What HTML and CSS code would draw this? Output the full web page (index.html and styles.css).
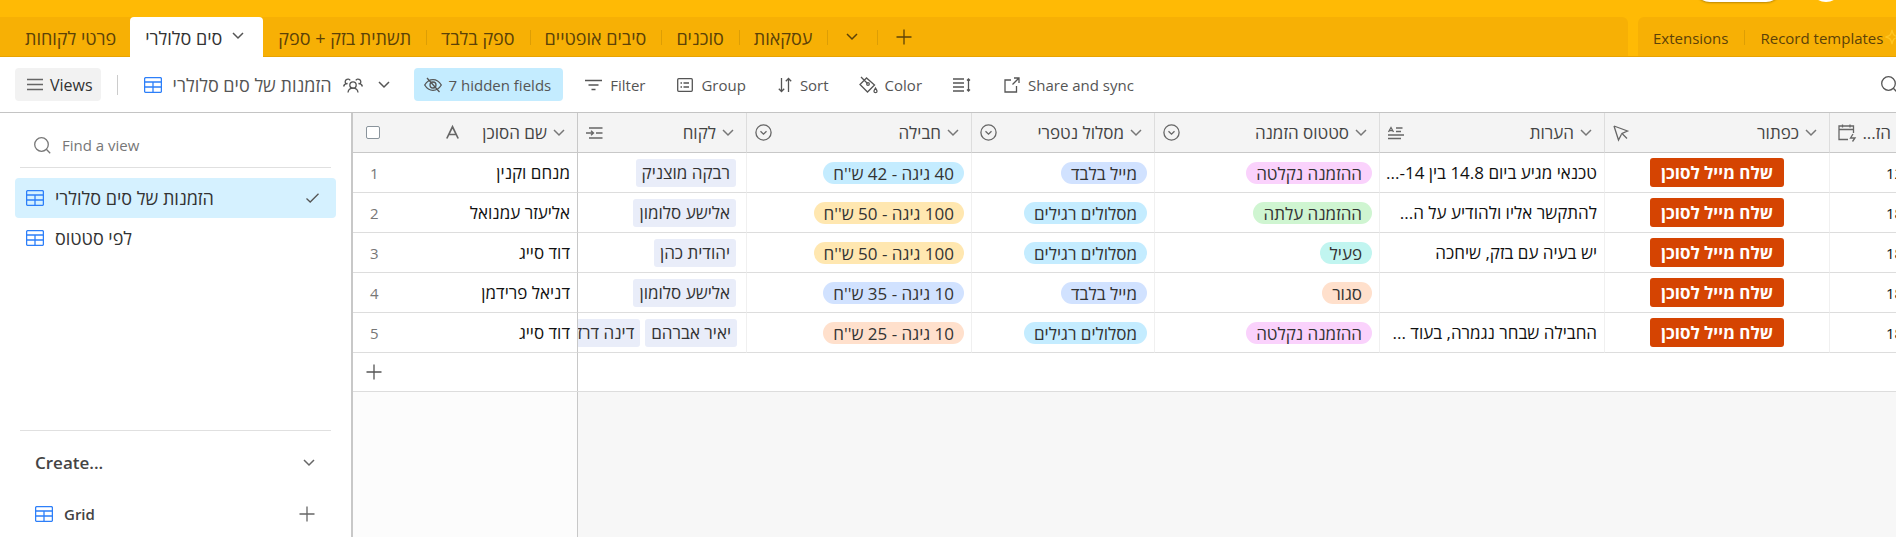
FILE: index.html
```html
<!DOCTYPE html>
<html lang="he">
<head>
<meta charset="utf-8">
<title>סים סלולרי</title>
<link rel="stylesheet" href="styles.css">
</head>
<body>
<svg class="defs" aria-hidden="true">
  <symbol id="grid" viewBox="0 0 18 16"><rect x="0.6" y="0.6" width="16.8" height="14.8" rx="1.2"/><path d="M0.6 5H17.4M0.6 10H17.4M9 5V15.4"/></symbol>
  <symbol id="chev" viewBox="0 0 12 8"><path d="M1 1l5 5 5-5"/></symbol>
  <symbol id="plus" viewBox="0 0 16 16"><path d="M8 0.5V15.5M0.5 8H15.5"/></symbol>
  <symbol id="search" viewBox="0 0 17 17"><circle cx="7.5" cy="7.5" r="6.8"/><path d="M12.3 12.3L16.2 16.2"/></symbol>
  <symbol id="select" viewBox="0 0 17 17"><circle cx="8.500" cy="8.500" r="7.600"/><path d="M5.500 7.200l3 3 3-3"/></symbol>
</svg>
<header class="top">
  <div class="base-bar"><span class="share-pill"></span><span class="avatar"></span></div>
  <div class="tabs-row">
    <nav class="tabs">
      <a class="tab" href="#">פרטי לקוחות</a>
      <a class="tab active" href="#"><span>סים סלולרי</span><svg class="chev"><use href="#chev"/></svg></a>
      <a class="tab" href="#">תשתית בזק + ספק</a>
      <a class="tab sep" href="#">ספק בלבד</a>
      <a class="tab sep" href="#">סיבים אופטיים</a>
      <a class="tab sep" href="#">סוכנים</a>
      <a class="tab sep" href="#">עסקאות</a>
      <button class="tab sep" aria-label="All tables"><svg class="chev"><use href="#chev"/></svg></button>
      <button class="tab sep" aria-label="Add table"><svg class="plus"><use href="#plus"/></svg></button>
    </nav>
    <nav class="tabs extras">
      <a class="tab" href="#">Extensions</a>
      <a class="tab sep" href="#">Record templates</a>
      <svg class="sparkle" viewBox="0 0 14 16"><path d="M7 1C8 6 9 7 14 8C9 9 8 10 7 15C6 10 5 9 0.500 8C5 7 6 6 7 1Z"/></svg>
    </nav>
  </div>
</header>
<div class="toolbar">
  <button class="tool views"><svg viewBox="0 0 16 14" width="16" height="14"><path d="M0 1.500H16M0 6.500H16M0 11.500H16"/></svg><span>Views</span></button>
  <span class="divider"></span>
  <button class="tool view-name"><svg class="grid"><use href="#grid"/></svg><span>הזמנות של סים סלולרי</span>
    <svg viewBox="0 0 20 16" width="20" height="16"><circle cx="10" cy="8" r="3.200"/><path d="M5 15.500C5.300 12.700 7.300 11.200 10 11.200S14.700 12.700 15 15.500M2.700 6.500A2.700 2.700 0 1 1 7.200 3.300M17.300 6.500A2.700 2.700 0 1 0 12.800 3.300M0.600 9.500C1 7.500 2.300 6.500 4.600 6.500M19.400 9.500C19 7.500 17.700 6.500 15.400 6.500"/></svg>
    <svg class="chev"><use href="#chev"/></svg></button>
  <button class="tool hidden-fields"><svg viewBox="0 0 18 16" width="18" height="16"><path d="M0.700 8C3 4.200 5.800 2.600 9 2.600S15 4.200 17.300 8C15 11.800 12.200 13.400 9 13.400S3 11.800 0.700 8ZM3 1L15.500 15"/><circle cx="9" cy="8" r="3"/></svg><span>7 hidden fields</span></button>
  <button class="tool filter"><svg viewBox="0 0 17 12" width="17" height="12"><path d="M0 1.500H17M3.500 6H13.500M6.500 10.500H10.500"/></svg><span>Filter</span></button>
  <button class="tool group"><svg viewBox="0 0 16 14" width="16" height="14"><rect x="0.700" y="0.700" width="14.600" height="12.600" rx="1"/><path d="M3.500 5H5M6.500 5H12M3.500 9H5M6.500 9H12"/></svg><span>Group</span></button>
  <button class="tool sort"><svg viewBox="0 0 14 16" width="14" height="16"><path d="M3.500 1V14.500M0.800 11.800L3.500 14.500L6.200 11.800M10.500 15V1.500M7.800 4.200L10.500 1.500L13.200 4.200"/></svg><span>Sort</span></button>
  <button class="tool color"><svg viewBox="0 0 19 18" width="19" height="18"><path d="M2 1L8.500 7.500M7.500 2L1 8.500L8.500 16L15.500 9Z"/><circle cx="9" cy="8" r="1.300"/><path d="M16.500 12C17.500 13.500 18 14.500 18 15.200A1.500 1.500 0 0 1 15 15.200C15 14.500 15.500 13.500 16.500 12Z"/></svg><span>Color</span></button>
  <button class="tool height" aria-label="Row height"><svg viewBox="0 0 18 14" width="18" height="14"><path d="M0 1H11M0 5H11M0 9H11M0 13H11M15.500 1V13M14 2.500L15.500 1L17 2.500M14 11.500L15.500 13L17 11.500"/></svg></button>
  <button class="tool share"><svg viewBox="0 0 16 16" width="16" height="16"><path d="M7 3H1V15H12.500V9M10 1H15V6M15 1L8.500 7.500"/></svg><span>Share and sync</span></button>
  <button class="tool find" aria-label="Search"><svg class="search"><use href="#search"/></svg></button>
</div>
<div class="main">
  <aside class="sidebar">
    <label class="find-view"><svg class="search"><use href="#search"/></svg><input type="text" placeholder="Find a view"></label>
    <a class="view current" href="#"><svg class="grid"><use href="#grid"/></svg><span>הזמנות של סים סלולרי</span><svg class="check" viewBox="0 0 13 10"><path d="M0.500 5.500L4.200 9L12.500 0.800"/></svg></a>
    <a class="view" href="#"><svg class="grid"><use href="#grid"/></svg><span>לפי סטטוס</span></a>
    <div class="create">
      <button class="create-head"><span>Create...</span><svg class="chev"><use href="#chev"/></svg></button>
      <button class="create-item"><svg class="grid"><use href="#grid"/></svg><span>Grid</span><svg class="plus"><use href="#plus"/></svg></button>
    </div>
  </aside>
  <div class="sheet">
    <table class="data">
      <colgroup><col class="c-num"><col class="c-agent"><col class="c-client"><col class="c-wide"><col class="c-route"><col class="c-wide"><col class="c-wide"><col class="c-wide"><col></colgroup>
      <thead>
        <tr>
          <th class="num"><input type="checkbox" aria-label="Select all"></th>
          <th class="agent"><div class="head"><svg class="bold" viewBox="0 0 13 13" width="13" height="13"><path d="M0.800 12.500L6.500 0.800L12.200 12.500M2.800 8.500H10.200"/></svg><span>שם הסוכן</span><svg class="chev"><use href="#chev"/></svg></div></th>
          <th><div class="head"><svg viewBox="0 0 17 12" width="17" height="12"><path d="M3 1H16.500M10 6H16.500M3 11H16.500M0 6H7.500M5 3.800L7.500 6L5 8.200"/></svg><span>לקוח</span><svg class="chev"><use href="#chev"/></svg></div></th>
          <th><div class="head"><svg class="select"><use href="#select"/></svg><span>חבילה</span><svg class="chev"><use href="#chev"/></svg></div></th>
          <th><div class="head"><svg class="select"><use href="#select"/></svg><span>מסלול נטפרי</span><svg class="chev"><use href="#chev"/></svg></div></th>
          <th><div class="head"><svg class="select"><use href="#select"/></svg><span>סטטוס הזמנה</span><svg class="chev"><use href="#chev"/></svg></div></th>
          <th><div class="head"><svg viewBox="0 0 16 12" width="16" height="12"><path d="M0.500 5L3 0.500L5.500 5M1.500 3.600H4.500M8 1H14.500M8 4.500H13M0 8H16M0 11.500H13"/></svg><span>הערות</span><svg class="chev"><use href="#chev"/></svg></div></th>
          <th><div class="head"><svg viewBox="0 0 16 16" width="16" height="16"><path d="M1 1L14.500 6L9 8.500L14 13.500M1 1L5.500 15L8.500 9.200"/></svg><span>כפתור</span><svg class="chev"><use href="#chev"/></svg></div></th>
          <th class="created"><div class="head"><svg viewBox="0 0 18 18" width="18" height="18"><path d="M10 15.500H1V2H15.500V9M1 5.500H15.500M4.500 0.500V3.500M12 0.500V3.500M15 10L12.500 14H17L14.500 17.500"/></svg><span dir="rtl">הז...</span></div></th>
        </tr>
      </thead>
      <tbody>
        <tr><td class="num">1</td><td class="agent">מנחם וקנין</td><td class="links"><div><span>רבקה מוצניק</span></div></td><td><span class="pill cyan">40 גיגה - 42 ש''ח</span></td><td><span class="pill blue">מייל בלבד</span></td><td><span class="pill pink">ההזמנה נקלטה</span></td><td class="note">טכנאי מגיע ביום 14.8 בין 14-...</td><td class="act"><button>שלח מייל לסוכן</button></td><td class="date">12</td></tr>
        <tr><td class="num">2</td><td class="agent">אליעזר עמנואל</td><td class="links"><div><span>אלישע סלומון</span></div></td><td><span class="pill yellow">100 גיגה - 50 ש''ח</span></td><td><span class="pill cyan">מסלולים רגילים</span></td><td><span class="pill green">ההזמנה עלתה</span></td><td class="note">להתקשר אליו ולהודיע על ה...</td><td class="act"><button>שלח מייל לסוכן</button></td><td class="date">18</td></tr>
        <tr><td class="num">3</td><td class="agent">דוד סייג</td><td class="links"><div><span>יהודית כהן</span></div></td><td><span class="pill yellow">100 גיגה - 50 ש''ח</span></td><td><span class="pill cyan">מסלולים רגילים</span></td><td><span class="pill teal">פעיל</span></td><td class="note">יש בעיה עם בזק, שיחכה</td><td class="act"><button>שלח מייל לסוכן</button></td><td class="date">18</td></tr>
        <tr><td class="num">4</td><td class="agent">דניאל פרידמן</td><td class="links"><div><span>אלישע סלומון</span></div></td><td><span class="pill blue">10 גיגה - 35 ש''ח</span></td><td><span class="pill blue">מייל בלבד</span></td><td><span class="pill orange">סגור</span></td><td class="note"></td><td class="act"><button>שלח מייל לסוכן</button></td><td class="date">18</td></tr>
        <tr><td class="num">5</td><td class="agent">דוד סייג</td><td class="links"><div><span>יאיר אברהם</span><span>דינה דרזי</span></div></td><td><span class="pill orange">10 גיגה - 25 ש''ח</span></td><td><span class="pill cyan">מסלולים רגילים</span></td><td><span class="pill pink">ההזמנה נקלטה</span></td><td class="note">החבילה שבחר נגמרה, בעוד ...</td><td class="act"><button>שלח מייל לסוכן</button></td><td class="date">18</td></tr>
      </tbody>
    </table>
    <div class="add-row"><button aria-label="Add record"><svg class="plus"><use href="#plus"/></svg></button></div>
    <div class="rest"></div>
  </div>
</div>
</body>
</html>
```
FILE: styles.css
```css
* { box-sizing: border-box; }
body { margin: 0; height: 100vh; display: flex; flex-direction: column; overflow: hidden; background: #fff; color: #333; font: 15px/20px "Open Sans", "Noto Sans", sans-serif; }
button, input { font: inherit; color: inherit; }
button { border: 0; padding: 0; background: none; cursor: pointer; }
a { color: inherit; text-decoration: none; }
svg { fill: none; stroke: currentColor; stroke-width: 1.3; flex: none; overflow: visible; }
.defs { position: absolute; width: 0; height: 0; }
.chev { width: 12px; height: 8px; stroke-width: 1.5; }
.plus { width: 16px; height: 16px; }
.grid { width: 18px; height: 16px; color: #2d7ff9; }
.search { width: 17px; height: 17px; }
.select { width: 17px; height: 17px; }
.bold { stroke-width: 1.7; }

.top { background: #ffba05; }
.base-bar { height: 17px; display: flex; justify-content: flex-end; align-items: flex-start; gap: 28px; padding-right: 54px; overflow: hidden; }
.share-pill { width: 88px; height: 32px; margin-top: -30px; border-radius: 16px; background: #fff; box-shadow: 0 1px 2px #0004; }
.avatar { width: 32px; height: 32px; margin-top: -30px; border-radius: 16px; background: #fff; }
.tabs-row { display: flex; gap: 10px; height: 40px; border-bottom: 1px solid #e8a302; }
.tabs { display: flex; flex: 1; background: #f7b005; border-top-right-radius: 6px; color: #5c4208; font-size: 18px; }
.tab { display: flex; align-items: center; position: relative; padding: 2px 15px 0; white-space: nowrap; }
.tabs > .tab:first-child { padding-left: 25px; padding-right: 14px; }
.tab.active { height: 40px; background: #fff; color: #333; padding-right: 19px; gap: 10px; border-radius: 4px 4px 0 0; }
.tab.active .chev { color: #555; margin-top: -4px; }
.tab.sep::before { content: ""; position: absolute; left: 0; top: 13px; width: 1px; height: 15px; background: #dd9e05; }
button.tab { padding: 0 19px; }
.extras { flex: none; width: 258px; border-radius: 6px 0 0 0; overflow: hidden; font-size: 15px; }
.extras > .tab:first-child { padding-left: 15px; padding-right: 16px; }
.extras .tab.sep { padding-left: 16px; padding-right: 2px; }
.sparkle { width: 14px; height: 16px; margin-top: 12px; color: #ffc41f; }

.toolbar { display: flex; align-items: center; height: 56px; padding: 0 15px; border-bottom: 1px solid #c4c4c4; color: #555; }
.tool { display: flex; align-items: center; gap: 8px; height: 33px; border-radius: 4px; white-space: nowrap; }
.views { padding: 0 8px 0 12px; gap: 7px; background: #f2f2f2; color: #333; font-size: 16px; font-weight: 500; }
.views svg { color: #666; }
.divider { width: 1px; height: 20px; margin: 0 26px 0 16px; background: #ccc; }
.view-name { gap: 11px; font-size: 18px; font-weight: 500; }
.view-name .chev { margin-left: 4px; }
.hidden-fields { margin-left: 24px; padding: 0 12px 0 10px; gap: 7px; background: #c4ecff; }
.filter { margin-left: 22px; }
.group { margin-left: 32px; }
.sort { margin-left: 32px; }
.color { margin-left: 30px; gap: 7px; }
.height { margin-left: 31px; }
.share { margin-left: 33px; }
.find { margin-left: auto; margin-right: -17px; }

.main { display: flex; flex: 1; min-height: 0; }
.sidebar { display: flex; flex-direction: column; width: 353px; flex: none; padding: 12px 15px 0; border-right: 2px solid #c8c8c8; }
.find-view { display: flex; align-items: center; gap: 11px; height: 43px; margin: 0 5px 10px; padding: 0 14px 2px; border-bottom: 1px solid #e0e0e0; color: #777; }
.find-view input { flex: 1; min-width: 0; border: 0; padding: 0; outline: 0; background: none; }
.find-view input::placeholder { color: #777; }
.view { display: flex; align-items: center; gap: 11px; height: 40px; padding: 0 17px 0 11px; border-radius: 4px; font-size: 18px; font-weight: 500; }
.view.current { background: #d5f1ff; }
.check { width: 13px; height: 10px; margin-left: auto; color: #555; }
.create { margin: auto 5px 0; border-top: 1px solid #e0e0e0; padding: 12px 16px 0 15px; color: #444; font-weight: 600; }
.create button { display: flex; align-items: center; width: 100%; gap: 11px; }
.create .create-head { height: 40px; font-size: 17px; }
.create-item { height: 54px; padding-top: 8px; }
.create button svg:last-child { margin-left: auto; color: #666; }

.sheet { flex: 1; min-width: 0; display: flex; flex-direction: column; overflow: hidden; background: #f7f7f7; }
.data { table-layout: fixed; width: 100%; border-collapse: separate; border-spacing: 0; background: #fff; flex: none; }
.c-num { width: 64px; } .c-agent { width: 161px; } .c-client { width: 169px; } .c-wide { width: 225px; } .c-route { width: 183px; }
th, td { height: 40px; padding: 0; font-size: 17px; font-weight: 400; border-bottom: 1px solid #ddd; border-right: 1px solid #f0f0f0; overflow: hidden; white-space: nowrap; }
th { background: #f4f4f4; border-color: #ddd; border-bottom-color: #c8c8c8; color: #444; }
.num { text-align: left; padding-left: 17px; border-right: 0; color: #777; }
.agent { border-right: 1px solid #c8c8c8; }
.num input { appearance: none; display: block; width: 14px; height: 13px; margin: 0 0 0 -4px; border: 1px solid #8a949c; border-radius: 2px; background: #fff; }
.head { display: flex; align-items: center; gap: 6px; padding: 0 12px 0 8px; }
.head > svg:first-child { margin-right: auto; color: #666; }
.head .chev { color: #777; }
.agent .head { padding-left: 29px; }
.created, .date { border-right: 0; }
.created .head { padding-right: 5px; }
td { text-align: right; direction: rtl; padding-right: 7px; color: #111; }
td.num { direction: ltr; text-align: left; color: #777; font-size: 15px; }
td.links { padding-right: 10px; }
.links div { display: flex; gap: 5px; }
.links span { flex: none; height: 28px; padding: 4px 6px; border-radius: 3px; background: #e9edf9; color: #333; }
.pill { display: inline-block; height: 22px; line-height: 23px; padding: 0 10px; border-radius: 11px; color: #333; vertical-align: middle; }
.cyan { background: #c4ecff; } .blue { background: #d1e2ff; } .yellow { background: #ffe7b0; } .pink { background: #fad2fc; } .green { background: #cff5d1; } .teal { background: #c1f5f0; } .orange { background: #ffe0cc; }
td.act { text-align: center; padding: 0; }
.act button { height: 29px; padding: 0 11px; border-radius: 3px; background: #d54402; color: #fff; font-weight: 700; }
td.date { direction: ltr; text-align: left; padding: 0 0 0 56px; font-size: 15px; }
.add-row { display: flex; align-items: center; height: 39px; flex: none; background: #fff; border-bottom: 1px solid #ddd; }
.add-row button { display: flex; align-items: center; width: 225px; height: 100%; padding-left: 13px; border-right: 1px solid #c8c8c8; color: #555; }
.rest { flex: 1; width: 225px; border-right: 1px solid #c8c8c8; background: #fcfcfc; }
```
